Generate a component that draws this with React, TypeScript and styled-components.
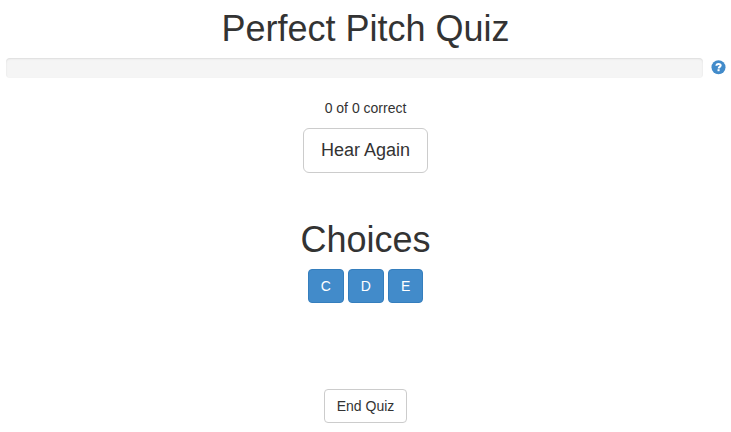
import React from "react";
import styled, { createGlobalStyle } from "styled-components";

const GlobalStyle = createGlobalStyle`
  *, *::before, *::after { box-sizing: border-box; }
  body {
    margin: 0;
    background: #fff;
    color: #333;
    font: 14px/20px "Liberation Sans", Arial, sans-serif;
  }
`;

const Page = styled.main`
  display: flex;
  flex-direction: column;
  align-items: center;
  height: 432px;
  overflow: hidden;
  padding: 9px 5px 0;
`;

const Heading = styled.h1`
  margin: 0;
  font-size: 36px;
  line-height: 40px;
  font-weight: 500;
`;

const ProgressRow = styled.div`
  display: flex;
  align-items: flex-start;
  align-self: stretch;
  gap: 8px;
  margin: 9px 0 0 1px;
  height: 20px;
`;

const ProgressTrack = styled.div`
  flex: 1;
  height: 20px;
  border-radius: 4px;
  background: #f5f5f5;
  box-shadow: inset 0 1px 2px rgba(0, 0, 0, 0.1);
`;

const HelpIcon = styled.svg`
  display: block;
  width: 15px;
  height: 15px;
  margin-top: 2px;
  color: #428bca;
`;

const Score = styled.p`
  margin: 20px 0 10px;
`;

const Button = styled.button<{ $primary?: boolean; $large?: boolean }>`
  margin: 0;
  min-width: ${(p) => (p.$large ? "125px" : "0")};
  padding: ${(p) => (p.$large ? "10px 16px" : "6px 12px")};
  border: 1px solid ${(p) => (p.$primary ? "#357ebd" : "#ccc")};
  border-radius: ${(p) => (p.$large ? 6 : 4)}px;
  background: ${(p) => (p.$primary ? "#428bca" : "#fff")};
  color: ${(p) => (p.$primary ? "#fff" : "#333")};
  font-family: inherit;
  font-size: ${(p) => (p.$large ? 18 : 14)}px;
  line-height: ${(p) => (p.$large ? 23 : 20)}px;
  cursor: pointer;
`;

const Choices = styled.section`
  display: flex;
  flex-direction: column;
  align-items: center;
  gap: 9px;
  margin: 47px 0 86px;
`;

const ChoiceRow = styled.div`
  display: flex;
  gap: 4px;
`;

const notes = ["C", "D", "E"];

export default function App() {
  return (
    <>
      <GlobalStyle />
      <Page>
        <Heading>Perfect Pitch Quiz</Heading>
        <ProgressRow>
          <ProgressTrack />
          <HelpIcon viewBox="0 0 15 15" aria-label="Help">
            <circle cx="7.5" cy="7.2" r="7" fill="currentColor" />
            <path
              d="M5.4 5.8C5.4 4.5 6.2 3.9 7.5 3.9s2.2.7 2.2 1.7c0 1.3-2 1.3-2 2.8"
              fill="none"
              stroke="#fff"
              strokeWidth="2"
            />
            <path d="M6.5 9.2h2.1v2H6.5z" fill="#fff" />
          </HelpIcon>
        </ProgressRow>
        <Score>0 of 0 correct</Score>
        <Button $large>Hear Again</Button>
        <Choices>
          <Heading>Choices</Heading>
          <ChoiceRow>
            {notes.map((note) => (
              <Button key={note} $primary>{note}</Button>
            ))}
          </ChoiceRow>
        </Choices>
        <Button>End Quiz</Button>
      </Page>
    </>
  );
}
